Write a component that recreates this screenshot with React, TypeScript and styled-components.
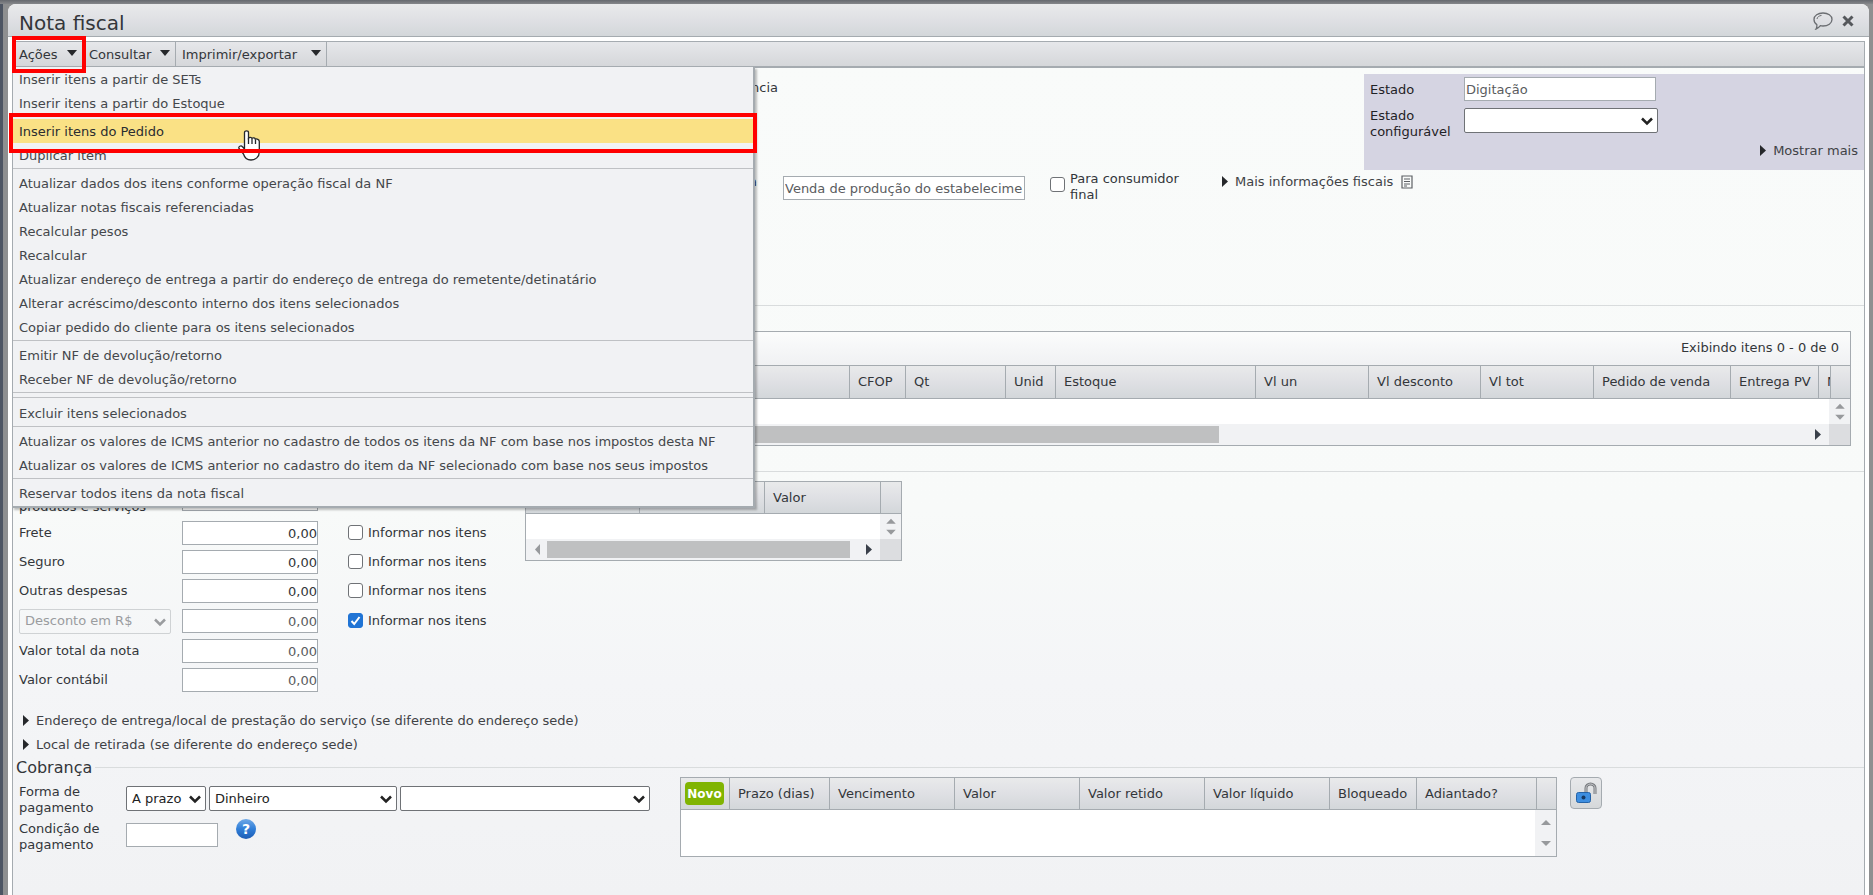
import React, { useId } from 'react';
import styled, { createGlobalStyle, css } from 'styled-components';

const line = '#a5abb0';
const softLine = '#d9dcdd';
const barFill = 'linear-gradient(#e9eaeb, #dfe0e4 50%, #d3d7da)';

const GlobalStyle = createGlobalStyle`
  *, *::before, *::after { box-sizing: border-box; }
  body {
    margin: 0;
    background: #4d5563;
    color: #33363a;
    font-family: Verdana, "DejaVu Sans", sans-serif;
    font-size: 13px;
    line-height: 16px;
  }
  button, input, select { font: inherit; color: inherit; }
  button { cursor: pointer; }
  fieldset { border: 0; margin: 0; padding: 0; min-width: 0; }
`;

const Backdrop = styled.div`
  min-height: 100vh;
  display: flex;
  padding: 4px 4px 0 8px;
  background:
    linear-gradient(#66696e, #85878a) top / 100% 4px no-repeat,
    linear-gradient(90deg, #4d5563 3px, #8e8f90 3px);
  overflow: hidden;
`;

const Window = styled.main`
  flex: 1;
  min-width: 0;
  display: flex;
  flex-direction: column;
  background: #fff;
  border-radius: 8px 8px 0 0;
`;

const TitleBar = styled.header`
  height: 33px;
  display: flex;
  align-items: center;
  justify-content: space-between;
  padding: 6px 15px 0 11px;
  border-bottom: 1px solid ${line};
  border-radius: 8px 8px 0 0;
  background: ${barFill};
`;

const Title = styled.h1`
  margin: 0;
  font-size: 20px;
  font-weight: 400;
  line-height: 26px;
`;

const TitleActions = styled.div`
  display: flex;
  align-items: center;
  gap: 9px;
  padding-bottom: 5px;
`;

const IconButton = styled.button`
  display: flex;
  padding: 0;
  border: 0;
  background: none;
`;

const Frame = styled.div`
  flex: 1;
  display: flex;
  flex-direction: column;
  margin: 4px 4px 0 4px;
  border: 1px solid ${line};
  border-bottom: 0;
  background: linear-gradient(#f9fbfa, #f8faf9 55%, #f4f5f7 75%, #f1f2f4);
`;

const MenuBar = styled.nav`
  position: relative;
  display: flex;
  height: 26px;
  border-bottom: 2px solid ${line};
  background: linear-gradient(#e6e7ea, #d5d7da);
`;

const MenuHost = styled.div`
  position: relative;
  display: flex;
`;

const MenuButton = styled.button<{ $width: number }>`
  display: flex;
  align-items: center;
  justify-content: space-between;
  width: ${(p) => p.$width}px;
  padding: 1px 5px 0 6px;
  border: 0;
  border-right: 1px solid ${line};
  background: none;
  svg { margin-bottom: 4px; }
`;

const highlight = css`
  content: '';
  position: absolute;
  pointer-events: none;
  z-index: 3;
`;

const ActiveHost = styled(MenuHost)`
  &::after {
    ${highlight}
    inset: -6px -3px -7px -1px;
    border: 4px solid #f00;
  }
`;

const Menu = styled.ul`
  position: absolute;
  top: 25px;
  left: -1px;
  z-index: 2;
  width: 743px;
  margin: 0;
  padding: 0 0 1px;
  list-style: none;
  border: 1px solid ${line};
  border-top: 0;
  border-right-width: 2px;
  border-bottom-width: 2px;
  background: #f1f2f4;
  box-shadow: 2px 2px 2px rgba(0, 0, 0, 0.25);
`;

const MenuItem = styled.li<{ $active?: boolean }>`
  position: relative;
  color: ${(p) => (p.$active ? '#2b2d30' : '#44474b')};
  background: ${(p) => (p.$active ? '#fae185' : 'transparent')};
  ${(p) =>
    p.$active &&
    css`
      &::after {
        ${highlight}
        inset: -6px -4px -10px -4px;
        border: 4px solid #f00;
      }
    `}
`;

const MenuAction = styled.button`
  display: block;
  width: 100%;
  height: 24px;
  padding: 2px 6px 0;
  border: 0;
  background: none;
  text-align: left;
  white-space: nowrap;
`;

const MenuSeparator = styled.li<{ $double?: boolean }>`
  height: ${(p) => (p.$double ? 10 : 4)}px;
  padding-top: 1px;
  &::before {
    content: '';
    display: block;
    height: ${(p) => (p.$double ? 6 : 1)}px;
    border: solid #bfc1c4;
    border-width: ${(p) => (p.$double ? '1px 0' : '1px 0 0')};
  }
`;

const HandCursor = styled.svg`
  position: absolute;
  left: 225px;
  top: 11px;
  z-index: 2;
  pointer-events: none;
`;

const Section = styled.fieldset<{ $height: number }>`
  min-height: ${(p) => p.$height}px;
  border-bottom: 1px solid ${softLine};
`;

const Identification = styled.div`
  display: flex;
  justify-content: space-between;
  align-items: flex-start;
  padding-top: 6px;
`;

const Reference = styled.span`
  width: 765px;
  padding-top: 6px;
  text-align: right;
`;

const StatePanel = styled.div`
  width: 500px;
  height: 96px;
  padding: 3px 6px 0;
  display: grid;
  grid-template-columns: 94px 194px;
  grid-template-rows: 31px 32px 20px;
  align-items: start;
  background: #d5d4e2;
`;

const StateLabel = styled.label<{ $twoLines?: boolean }>`
  color: #1f2226;
  padding-top: ${(p) => (p.$twoLines ? 0 : 5)}px;
`;

const TextInput = styled.input<{ $width: number; $muted?: boolean; $numeric?: boolean }>`
  width: ${(p) => p.$width}px;
  height: 24px;
  padding: ${(p) => (p.$numeric ? '0' : '0 1px')};
  border: 1px solid ${line};
  border-radius: 0;
  background: #fff;
  color: ${(p) => (p.$muted ? '#5a5c60' : '#33363a')};
  text-align: ${(p) => (p.$numeric ? 'right' : 'left')};
`;

const SelectWrap = styled.span<{ $width: number; $disabled?: boolean }>`
  position: relative;
  display: inline-flex;
  width: ${(p) => p.$width}px;
  color: ${(p) => (p.$disabled ? '#9a9c9f' : '#222')};
  svg { position: absolute; right: 5px; top: 9px; pointer-events: none; }
`;

const NativeSelect = styled.select`
  appearance: none;
  width: 100%;
  height: 25px;
  padding: 0 18px 0 5px;
  border: 1px solid #6f7276;
  border-radius: 2px;
  background: #fff;
  &:disabled {
    border-color: #cfd2d4;
    background: transparent;
    opacity: 1;
    color: inherit;
  }
`;

const Disclosure = styled.button`
  display: flex;
  align-items: center;
  gap: 5px;
  padding: 0;
  border: 0;
  background: none;
  white-space: nowrap;
  color: #3f4246;
  svg { margin-bottom: 2px; }
`;

const StateMore = styled.div`
  grid-column: 1 / -1;
  width: 488px;
  display: flex;
  justify-content: flex-end;
  padding-top: 3px;
`;

const FiscalRow = styled.div`
  display: flex;
  align-items: flex-start;
  padding-top: 1px;
`;

const OperationLabel = styled.label`
  width: 744px;
  padding-top: 3px;
  text-align: right;
`;

const OperationField = styled.div`
  padding: 5px 0 0 26px;
`;

const CheckLabel = styled.label<{ $wrap?: boolean }>`
  display: flex;
  align-items: center;
  gap: 5px;
  width: ${(p) => (p.$wrap ? '147px' : 'auto')};
  white-space: ${(p) => (p.$wrap ? 'normal' : 'nowrap')};
`;

const ConsumerCheck = styled.div`
  padding: 0 7px 0 25px;
  input { margin-bottom: 6px; }
`;

const Check = styled.input`
  appearance: none;
  flex: none;
  width: 15px;
  height: 15px;
  margin: 0 0 2px;
  border: 1px solid #6f7276;
  border-radius: 3px;
  background: #fff;
  &:checked {
    border-color: #2074d5;
    background: #2074d5
      url("data:image/svg+xml,%3Csvg xmlns='http://www.w3.org/2000/svg' viewBox='0 0 13 13'%3E%3Cpath d='M2.5 7l2.700 3L10.500 3' fill='none' stroke='white' stroke-width='2'/%3E%3C/svg%3E");
  }
`;

const FiscalMore = styled.div`
  display: flex;
  align-items: center;
  gap: 8px;
  padding: 3px 0 0 16px;
`;

const Grid = styled.div<{ $width?: number }>`
  width: ${(p) => (p.$width ? `${p.$width}px` : 'auto')};
  flex: none;
  border: 1px solid ${line};
  background: #fff;
`;

const GridCaption = styled.div`
  height: 34px;
  padding: 8px 11px;
  text-align: right;
  border-bottom: 1px solid ${line};
  background: linear-gradient(#fbfcfc, #f0f1f3);
`;

const Table = styled.table`
  width: 100%;
  table-layout: fixed;
  border-collapse: separate;
  border-spacing: 0;
`;

const HeadCell = styled.th<{ $width?: number; $tall?: boolean }>`
  width: ${(p) => (p.$width ? `${p.$width}px` : 'auto')};
  height: ${(p) => (p.$tall ? 33 : 32)}px;
  padding: 0 0 0 8px;
  overflow: hidden;
  border-right: 1px solid ${line};
  border-bottom: 1px solid ${line};
  background: ${barFill};
  font-weight: 400;
  text-align: left;
  white-space: nowrap;
  &:last-child { border-right: 0; }
`;

const GridBody = styled.div<{ $height: number }>`
  display: flex;
  justify-content: flex-end;
  height: ${(p) => p.$height}px;
`;

const VerticalBar = styled.div`
  width: 21px;
  display: flex;
  flex-direction: column;
  align-items: center;
  justify-content: space-around;
  padding: 2px 0;
  background: #f1f2f4;
`;

const HorizontalBar = styled.div`
  display: flex;
  height: 21px;
  background: #f1f2f4;
`;

const Track = styled.div`
  flex: 1;
  display: flex;
  align-items: center;
  justify-content: space-between;
  padding: 0 6px 0 7px;
`;

const ThumbLane = styled.div`
  flex: 1;
  margin: 0 14px 0 4px;
`;

const Thumb = styled.div<{ $share: number }>`
  width: ${(p) => p.$share}%;
  height: 17px;
  background: #bfc0c1;
`;

const BarCorner = styled.div`
  width: 21px;
  background: #dcdde0;
`;

const ItemsArea = styled.div`
  padding: 25px 13px 0 6px;
`;

const TotalsArea = styled.div`
  display: flex;
  align-items: flex-start;
  padding: 9px 6px 0;
`;

const Totals = styled.div`
  display: flex;
  flex-direction: column;
  gap: 5px;
  width: 506px;
`;

const TotalRow = styled.div<{ $height?: number }>`
  display: grid;
  grid-template-columns: 163px 166px auto;
  align-items: center;
  height: ${(p) => p.$height ?? 24}px;
`;

const Disclosures = styled.div`
  display: flex;
  flex-direction: column;
  gap: 8px;
  padding: 21px 8px 0;
`;

const Billing = styled.section`
  padding-top: 5px;
`;

const BillingTitle = styled.h2`
  display: flex;
  align-items: center;
  gap: 3px;
  margin: 0;
  padding-left: 3px;
  font-size: 16px;
  font-weight: 400;
  line-height: 19px;
  &::after {
    content: '';
    flex: 1;
    height: 1px;
    background: ${softLine};
  }
`;

const BillingBody = styled.div`
  display: flex;
  align-items: flex-start;
  padding: 0 6px 36px;
`;

const BillingForm = styled.div`
  width: 661px;
  display: grid;
  gap: 5px;
  padding-top: 7px;
`;

const BillingRow = styled.div`
  display: flex;
  gap: 3px;
  align-items: flex-start;
  height: 32px;
`;

const BillingLabel = styled.label`
  width: 104px;
`;

const BillingControls = styled.div`
  display: flex;
  gap: 3px;
  padding-top: 2px;
`;

const HelpButton = styled(IconButton)`
  height: 20px;
  margin: -4px 0 0 15px;
`;

const NewButton = styled.button`
  display: block;
  width: 39px;
  height: 23px;
  margin-left: -4px;
  padding: 0;
  border: 0;
  border-radius: 4px;
  background: #80b402;
  color: #fff;
  font-size: 12px;
  font-weight: 700;
`;

const LockButton = styled.button`
  display: flex;
  align-items: center;
  justify-content: center;
  width: 32px;
  height: 32px;
  margin-left: 13px;
  padding: 0;
  border: 1px solid ${line};
  border-radius: 4px;
  background: linear-gradient(#e8e9eb, #d5d8da);
`;

const arrowPaths = {
  down: 'M0 3h10L5 9z',
  right: 'M2 0l6 5.500L2 11z',
  scrollUp: 'M0 8l5-5 5 5z',
  scrollDown: 'M0 3h10L5 8z',
  scrollLeft: 'M7 0L2 5.500 7 11z',
};

function Arrow({ kind, color = '#26282b' }: { kind: keyof typeof arrowPaths; color?: string }) {
  return (
    <svg width="10" height="11" viewBox="0 0 10 11" aria-hidden="true">
      <path d={arrowPaths[kind]} fill={color} />
    </svg>
  );
}

function Select({ id, label, width, options = [''], disabled }: {
  id?: string; label?: string; width: number; options?: string[]; disabled?: boolean;
}) {
  return (
    <SelectWrap $width={width} $disabled={disabled}>
      <NativeSelect id={id} aria-label={label} disabled={disabled}>
        {options.map((o) => <option key={o}>{o}</option>)}
      </NativeSelect>
      <svg width="12" height="9" viewBox="0 0 12 9" fill="none" stroke="currentColor" strokeWidth="2.5">
        <path d="M1 1.500l5 5 5-5" />
      </svg>
    </SelectWrap>
  );
}

function VerticalScroll() {
  return (
    <VerticalBar>
      <Arrow kind="scrollUp" color="#97999c" />
      <Arrow kind="scrollDown" color="#97999c" />
    </VerticalBar>
  );
}

function HorizontalScroll({ share }: { share: number }) {
  return (
    <HorizontalBar>
      <Track>
        <Arrow kind="scrollLeft" color="#97999c" />
        <ThumbLane><Thumb $share={share} /></ThumbLane>
        <Arrow kind="right" color="#3a404a" />
      </Track>
      <BarCorner />
    </HorizontalBar>
  );
}

type Column = { title: React.ReactNode; width?: number };

function HeadRow({ columns, tall }: { columns: Column[]; tall?: boolean }) {
  return (
    <Table>
      <thead>
        <tr>
          {columns.map((c, i) => <HeadCell key={i} scope="col" $width={c.width} $tall={tall}>{c.title}</HeadCell>)}
        </tr>
      </thead>
    </Table>
  );
}

const menuGroups = [
  ['Inserir itens a partir de SETs', 'Inserir itens a partir do Estoque'],
  ['Inserir itens do Pedido', 'Duplicar item'],
  [
    'Atualizar dados dos itens conforme operação fiscal da NF',
    'Atualizar notas fiscais referenciadas',
    'Recalcular pesos',
    'Recalcular',
    'Atualizar endereço de entrega a partir do endereço de entrega do remetente/detinatário',
    'Alterar acréscimo/desconto interno dos itens selecionados',
    'Copiar pedido do cliente para os itens selecionados',
  ],
  ['Emitir NF de devolução/retorno', 'Receber NF de devolução/retorno'],
  ['Excluir itens selecionados'],
  [
    'Atualizar os valores de ICMS anterior no cadastro de todos os itens da NF com base nos impostos desta NF',
    'Atualizar os valores de ICMS anterior no cadastro do item da NF selecionado com base nos seus impostos',
  ],
  ['Reservar todos itens da nota fiscal'],
];

const activeAction = 'Inserir itens do Pedido';

const itemColumns: Column[] = [
  { title: '' },
  { title: 'CFOP', width: 56 },
  { title: 'Qt', width: 100 },
  { title: 'Unid', width: 50 },
  { title: 'Estoque', width: 200 },
  { title: 'Vl un', width: 113 },
  { title: 'Vl desconto', width: 112 },
  { title: 'Vl tot', width: 113 },
  { title: 'Pedido de venda', width: 137 },
  { title: 'Entrega PV', width: 88 },
  { title: 'NCM', width: 12 },
  { title: '', width: 19 },
];

const taxColumns: Column[] = [
  { title: '', width: 114 },
  { title: '', width: 125 },
  { title: 'Valor' },
  { title: '', width: 20 },
];

const billingColumns: Column[] = [
  { title: <NewButton type="button">Novo</NewButton>, width: 49 },
  { title: 'Prazo (dias)', width: 100 },
  { title: 'Vencimento', width: 125 },
  { title: 'Valor', width: 125 },
  { title: 'Valor retido', width: 125 },
  { title: 'Valor líquido', width: 125 },
  { title: 'Bloqueado', width: 87 },
  { title: 'Adiantado?' },
  { title: '', width: 19 },
];

function TotalField({ label, check, checked, muted }: {
  label: string; check?: boolean; checked?: boolean; muted?: boolean;
}) {
  const id = useId();
  const discount = label === 'Desconto em R$';
  return (
    <TotalRow $height={discount ? 26 : 24}>
      {discount
        ? <Select label="Tipo de desconto" width={152} options={[label]} disabled />
        : <label htmlFor={id}>{label}</label>}
      <TextInput id={id} aria-label={discount ? label : undefined} $width={136} $numeric $muted={muted} readOnly={muted} defaultValue="0,00" />
      {check && (
        <CheckLabel>
          <Check type="checkbox" defaultChecked={checked} /> Informar nos itens
        </CheckLabel>
      )}
    </TotalRow>
  );
}

function ActionsMenu() {
  return (
    <Menu>
      {menuGroups.map((group, g) => (
        <React.Fragment key={g}>
          {g > 0 && <MenuSeparator $double={g === 4} />}
          {group.map((text) => (
            <MenuItem key={text} $active={text === activeAction}>
              <MenuAction type="button">{text}</MenuAction>
              {text === activeAction && (
                <HandCursor width="24" height="31" viewBox="0 0 24 31">
                  <path
                    d="M6.500 2.500c0-2.300 4-2.300 4 0V8c.800-.900 3-.900 3.500.300 1-.700 3-.400 3.300.800 1.500-.400 4 .100 4 2.400V22c0 5-4 8-8.300 8-4 0-6.500-2.500-7.500-6L1 18.500c-1-2 2-3.500 3.500-1.700l2 2.200z"
                    fill="#fff" stroke="#26282b" strokeWidth="1.300"
                  />
                  <path d="M10.500 8v6M14 8.500v5.500M17.500 9.500V14" stroke="#26282b" strokeWidth="1.300" />
                </HandCursor>
              )}
            </MenuItem>
          ))}
        </React.Fragment>
      ))}
    </Menu>
  );
}

export default function App() {
  return (
    <Backdrop>
      <GlobalStyle />
      <Window>
        <TitleBar>
          <Title>Nota fiscal</Title>
          <TitleActions>
            <IconButton type="button" aria-label="Comentários">
              <svg width="20" height="18" viewBox="0 0 20 18" fill="none" stroke="#6b6e72" strokeWidth="1.300">
                <path d="M10 1c5 0 9 2.700 9 6.500S15 14 10 14c-1 0-1.800-.100-2.600-.300C6 15.500 5 16.500 3 17c1-1.500 1-2.800.800-4.400C2 11.400 1 9.700 1 7.500 1 3.700 5 1 10 1z" />
                <path d="M4 7c.300-2 2-3.200 4.500-3.600" strokeWidth="1" />
              </svg>
            </IconButton>
            <IconButton type="button" aria-label="Fechar">
              <svg width="12" height="12" viewBox="0 0 12 12" stroke="#55585c" strokeWidth="3">
                <path d="M1.500 1.500l9 9M10.500 1.500l-9 9" />
              </svg>
            </IconButton>
          </TitleActions>
        </TitleBar>
        <Frame>
          <MenuBar>
            <ActiveHost><MenuButton type="button" $width={70} aria-expanded="true">Ações <Arrow kind="down" /></MenuButton></ActiveHost>
            <MenuButton type="button" $width={93}>Consultar <Arrow kind="down" /></MenuButton>
            <MenuButton type="button" $width={151}>Imprimir/exportar <Arrow kind="down" /></MenuButton>
            <ActionsMenu />
          </MenuBar>

          <Section $height={238}>
            <Identification>
              <Reference>Referência</Reference>
              <StatePanel>
                <StateLabel htmlFor="estado">Estado</StateLabel>
                <TextInput id="estado" $width={192} $muted readOnly defaultValue="Digitação" />
                <StateLabel htmlFor="estado-config" $twoLines>Estado configurável</StateLabel>
                <Select id="estado-config" width={194} />
                <StateMore>
                  <Disclosure type="button"><Arrow kind="right" />Mostrar mais</Disclosure>
                </StateMore>
              </StatePanel>
            </Identification>
            <FiscalRow>
              <OperationLabel htmlFor="operacao">Operação de saída/entrada</OperationLabel>
              <OperationField>
                <TextInput id="operacao" $width={242} $muted defaultValue="Venda de produção do estabelecimento" />
              </OperationField>
              <ConsumerCheck>
                <CheckLabel $wrap><Check type="checkbox" /> Para consumidor final</CheckLabel>
              </ConsumerCheck>
              <FiscalMore>
                <Disclosure type="button"><Arrow kind="right" />Mais informações fiscais</Disclosure>
                <svg width="12" height="14" viewBox="0 0 12 14" fill="none" stroke="#5d6064" strokeWidth="1.200">
                  <path d="M1 1h10v12H1zM3 4h6M3 6.500h6M3 9h6M3 11h3" />
                </svg>
              </FiscalMore>
            </FiscalRow>
          </Section>

          <Section $height={166}>
            <ItemsArea>
              <Grid>
                <GridCaption>Exibindo itens 0 - 0 de 0</GridCaption>
                <HeadRow columns={itemColumns} tall />
                <GridBody $height={25}><VerticalScroll /></GridBody>
                <HorizontalScroll share={67} />
              </Grid>
            </ItemsArea>
          </Section>

          <TotalsArea>
            <Totals>
              <TotalRow $height={35}>
                <label htmlFor="total-produtos">Valor total dos<br />produtos e serviços</label>
                <TextInput id="total-produtos" $width={136} $numeric readOnly defaultValue="0,00" />
              </TotalRow>
              <TotalField label="Frete" check />
              <TotalField label="Seguro" check />
              <TotalField label="Outras despesas" check />
              <TotalField label="Desconto em R$" check checked muted />
              <TotalField label="Valor total da nota" muted />
              <TotalField label="Valor contábil" muted />
            </Totals>
            <Grid $width={377}>
              <HeadRow columns={taxColumns} />
              <GridBody $height={25}><VerticalScroll /></GridBody>
              <HorizontalScroll share={100} />
            </Grid>
          </TotalsArea>

          <Disclosures>
            <Disclosure type="button"><Arrow kind="right" />Endereço de entrega/local de prestação do serviço (se diferente do endereço sede)</Disclosure>
            <Disclosure type="button"><Arrow kind="right" />Local de retirada (se diferente do endereço sede)</Disclosure>
          </Disclosures>

          <Billing>
            <BillingTitle>Cobrança</BillingTitle>
            <BillingBody>
              <BillingForm>
                <BillingRow>
                  <BillingLabel htmlFor="forma">Forma de pagamento</BillingLabel>
                  <BillingControls>
                    <Select id="forma" width={80} options={['A prazo']} />
                    <Select label="Meio de pagamento" width={188} options={['Dinheiro']} />
                    <Select label="Detalhe do pagamento" width={250} />
                  </BillingControls>
                </BillingRow>
                <BillingRow>
                  <BillingLabel htmlFor="condicao">Condição de pagamento</BillingLabel>
                  <BillingControls>
                    <TextInput id="condicao" $width={92} />
                    <HelpButton type="button" aria-label="Ajuda">
                      <svg width="20" height="20" viewBox="0 0 20 20">
                        <defs>
                          <linearGradient id="help" x2="0" y2="1">
                            <stop stopColor="#6fa8e6" /><stop offset=".5" stopColor="#2f7ed8" /><stop offset="1" stopColor="#1d5cb4" />
                          </linearGradient>
                        </defs>
                        <circle cx="10" cy="10" r="10" fill="url(#help)" />
                        <text x="10" y="15" fill="#fff" fontSize="14" fontWeight="700" textAnchor="middle">?</text>
                      </svg>
                    </HelpButton>
                  </BillingControls>
                </BillingRow>
              </BillingForm>
              <Grid $width={877}>
                <HeadRow columns={billingColumns} />
                <GridBody $height={46}><VerticalScroll /></GridBody>
              </Grid>
              <LockButton type="button" aria-label="Desbloquear">
                <svg width="22" height="22" viewBox="0 0 22 22">
                  <path d="M11 11V6a4.500 4 0 0 1 9 0v6" fill="none" stroke="#777a7e" strokeWidth="3" />
                  <path d="M11 11V6a4.500 4 0 0 1 9 0v6" fill="none" stroke="#c9cbce" strokeWidth="1" />
                  <rect x="1.500" y="10.500" width="14" height="10" rx="2" fill="#3d8ee0" stroke="#2463a8" />
                  <circle cx="8.500" cy="15.500" r="2" fill="#173a63" />
                </svg>
              </LockButton>
            </BillingBody>
          </Billing>
        </Frame>
      </Window>
    </Backdrop>
  );
}
